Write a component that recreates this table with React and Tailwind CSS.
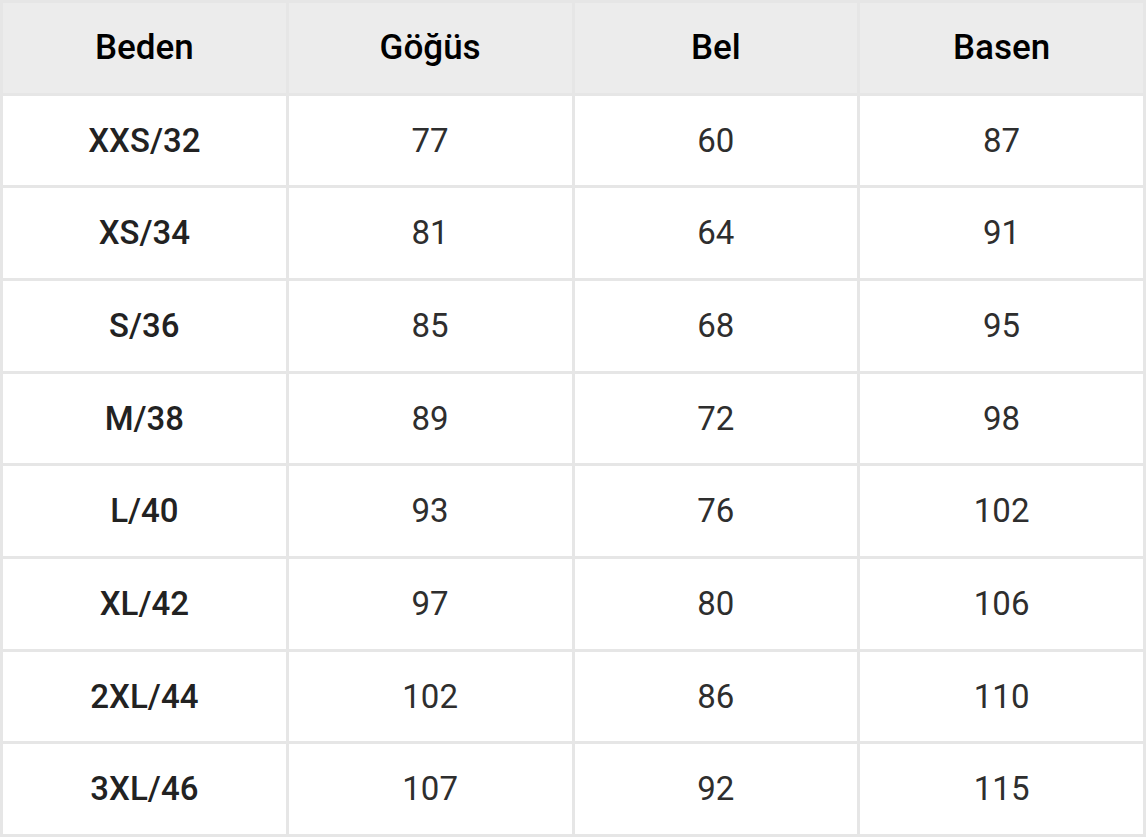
import React from 'react';

const headers = ['Beden', 'Göğüs', 'Bel', 'Basen'];

const rows = [
  ['XXS/32', '77', '60', '87'],
  ['XS/34', '81', '64', '91'],
  ['S/36', '85', '68', '95'],
  ['M/38', '89', '72', '98'],
  ['L/40', '93', '76', '102'],
  ['XL/42', '97', '80', '106'],
  ['2XL/44', '102', '86', '110'],
  ['3XL/46', '107', '92', '115'],
];

const SizeTable = () => (
  <div className="grid h-[837px] w-[1146px] grid-cols-4 grid-rows-9 gap-[3px] bg-[#e6e6e6] p-[3px] font-['Roboto',sans-serif] text-[33px]">
    {headers.map((h) => (
      <div
        key={h}
        className="flex items-center justify-center bg-[#ececec] font-['Roboto_Medium','Roboto',sans-serif] text-[35px] text-black"
      >
        {h}
      </div>
    ))}
    {rows.map((row) =>
      row.map((cell, i) => (
        <div
          key={row[0] + i}
          className={
            i === 0
              ? "flex items-center justify-center bg-white font-['Roboto_Medium','Roboto',sans-serif] text-[#222]"
              : 'flex items-center justify-center bg-white text-[#2e2e2e]'
          }
        >
          {cell}
        </div>
      ))
    )}
  </div>
);

export default function App() {
  return <SizeTable />;
}
